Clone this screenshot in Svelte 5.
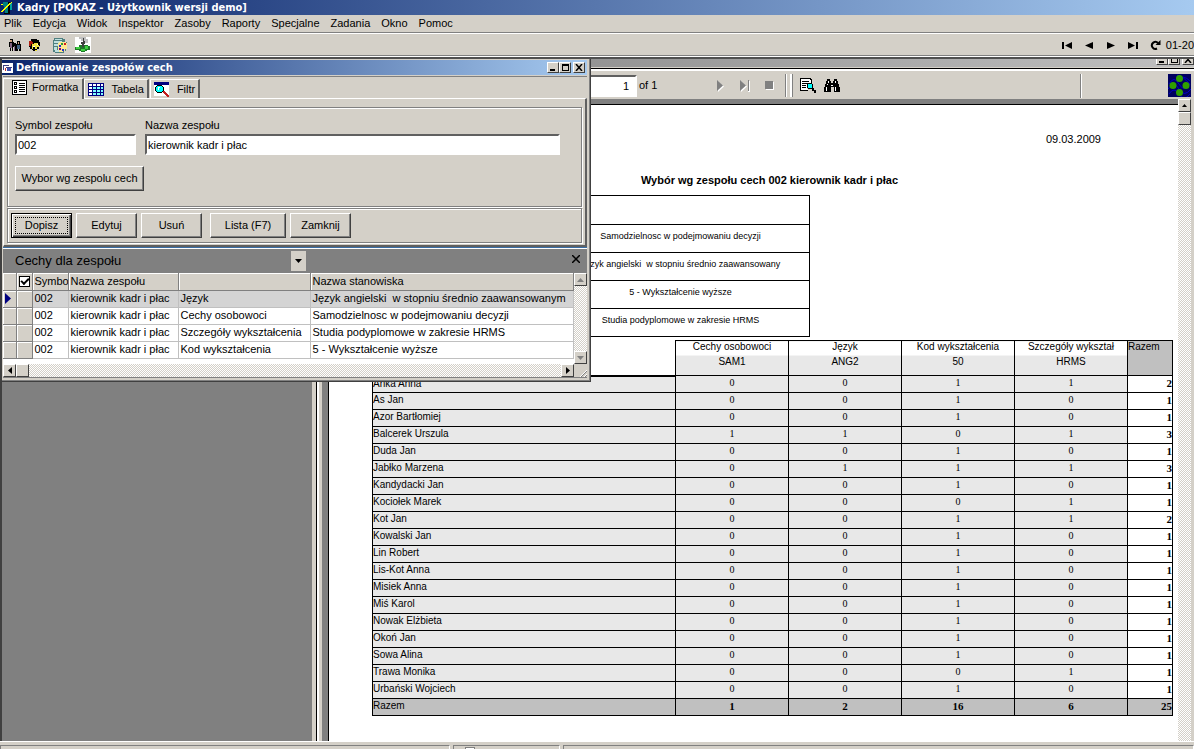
<script>
    const menu = ["Plik", "Edycja", "Widok", "Inspektor", "Zasoby", "Raporty", "Specjalne", "Zadania", "Okno", "Pomoc"];

    const traits = [
        ["Język", "Język angielski  w stopniu średnio zaawansowanym"],
        ["Cechy osobowoci", "Samodzielnosc w podejmowaniu decyzji"],
        ["Szczegóły wykształcenia", "Studia podyplomowe w zakresie HRMS"],
        ["Kod wykształcenia", "5 - Wykształcenie wyższe"]
    ];

    const criteria = [
        "",
        "Samodzielnosc w podejmowaniu decyzji",
        "Język angielski  w stopniu średnio zaawansowany",
        "5 - Wykształcenie wyższe",
        "Studia podyplomowe w zakresie HRMS"
    ];

    const columns = [
        ["Cechy osobowoci", "SAM1"],
        ["Język", "ANG2"],
        ["Kod wykształcenia", "50"],
        ["Szczegóły wykształ", "HRMS"]
    ];

    const people = [
        ["Anka Anna", 0, 0, 1, 1],
        ["As Jan", 0, 0, 1, 0],
        ["Azor Bartłomiej", 0, 0, 1, 0],
        ["Balcerek Urszula", 1, 1, 0, 1],
        ["Duda Jan", 0, 0, 1, 0],
        ["Jabłko Marzena", 0, 1, 1, 1],
        ["Kandydacki Jan", 0, 0, 1, 0],
        ["Kociołek Marek", 0, 0, 0, 1],
        ["Kot Jan", 0, 0, 1, 1],
        ["Kowalski Jan", 0, 0, 1, 0],
        ["Lin Robert", 0, 0, 1, 0],
        ["Lis-Kot Anna", 0, 0, 1, 0],
        ["Misiek Anna", 0, 0, 1, 0],
        ["Miś Karol", 0, 0, 1, 0],
        ["Nowak Elżbieta", 0, 0, 1, 0],
        ["Okoń Jan", 0, 0, 1, 0],
        ["Sowa Alina", 0, 0, 1, 0],
        ["Trawa Monika", 0, 0, 0, 1],
        ["Urbański Wojciech", 0, 0, 1, 0]
    ];

    const totals = [1, 2, 16, 6, 25];
    const sum = values => values.reduce((a, b) => a + b, 0);

    let symbol = "002";
    let name = "kierownik kadr i płac";
    let page = "1";
    let all = true;
</script>

<div class="app">
    <header class="title">
        <svg width="14" height="14" viewBox="0 0 14 14" shape-rendering="crispEdges">
            <path fill="#008080" d="M3 1h5v12H5V8H4V5H3z" />
            <path fill="#000" d="M8 1h2v11H8zM4 12h6v1H4z" />
            <path fill="#00a0a0" d="M10 2h2v7h-2z" />
            <path fill="#ffff00" d="M1 10h1V9h1V8h1V7h1V6h1V5h1V4h1V3h1V2h2v1h-1v1H9v1H8v1H7v1H6v1H5v1H4v1H3v1H1zM1 3h2v1H1zM11 1h1v1h-1z" />
        </svg>
        <span>Kadry [POKAZ - Użytkownik wersji demo]</span>
    </header>
    <nav class="menu">
        {#each menu as item}
            <button>{item}</button>
        {/each}
    </nav>
    <div class="toolbar">
        <button class="icon" aria-label="Pracownicy">
            <svg width="14" height="14" viewBox="0 0 14 14" shape-rendering="crispEdges">
                <path fill="#000" d="M1 4h1V1h3v3h1v5H5v4H2V9H1zM6 5h2v8H6zM9 3h3v3h1v7H8V6h1z" />
                <path fill="#806080" d="M2 5h2v5H2zM6 8h1v5H6z" />
                <path fill="#d4a080" d="M2 2h2v2H2zM10 4h1v2h-1z" />
                <path fill="#406080" d="M9 7h3v4H9z" />
                <path fill="#d4d0c8" d="M3 10h1v3H3zM10 11h1v2h-1z" />
            </svg>
        </button>
        <button class="icon" aria-label="Osoby">
            <svg width="14" height="14" viewBox="0 0 14 14" shape-rendering="crispEdges">
                <path fill="#000" d="M3 1h6v1h2v2h1v4h-1v3H9v2H5v-1H4v-1H2V9H1V3h2z" />
                <path fill="#b02010" d="M1 3h3v1h1v2H3v2H1z" />
                <path fill="#f0e040" d="M4 6h2V5h4v2h1v2H9v2H7V8H5v3H4zM7 12h2v1H7z" />
                <path fill="#fff" d="M5 8h2v1H5zM9 6h1v1H9z" />
            </svg>
        </button>
        <button class="icon gap" aria-label="Kolory">
            <svg width="17" height="17" viewBox="0 0 17 17" shape-rendering="crispEdges">
                <path fill="#508080" d="M3 1h9v1h2v3h2v6h-1v3h-2v2H4v-1H2V3h1z" />
                <path fill="#c0e0e0" d="M4 2h7v1H4zM3 4h8v2H3zM3 7h4v2H3zM3 10h3v3h2v2H4v-2H3z" />
                <path fill="#ffe890" d="M8 5h7v1h1v6h-2v2h-2v1H8v-2H7V6h1z" />
                <path fill="#d02020" d="M13 6h2v2h-2z" />
                <path fill="#30a030" d="M10 6h2v2h-2z" />
                <path fill="#2030d0" d="M8 8h2v2H8zM11 12h2v2h-2z" />
                <path fill="#800080" d="M8 11h2v2H8z" />
            </svg>
        </button>
        <button class="icon gap" aria-label="Drzewo">
            <svg width="16" height="16" viewBox="0 0 16 16" shape-rendering="crispEdges">
                <path fill="#fff" d="M0 0h16v16H0z" />
                <path fill="#c0c0c0" d="M4 0h7v2h2v4H9V4H6V2H4z" />
                <path fill="#207828" d="M4 8h9v1h2v4h-3v1h-2v1H6v-1H4v-1H0v-3h4z" />
                <path fill="#40d040" d="M1 10h4v2H1zM10 9h3v3h-3zM6 12h4v2H6z" />
                <path fill="#404040" d="M8 1h1v3h1v3H9v3H7V7H6V5h2z" />
            </svg>
        </button>
        <div class="records">
            <button class="icon" aria-label="Pierwszy"><svg width="11" height="9" viewBox="0 0 11 9"><path d="M0 1h2v7H0zM10 1v7L3 4.500z" /></svg></button>
            <button class="icon" aria-label="Poprzedni"><svg width="9" height="9" viewBox="0 0 9 9"><path d="M8 1v7L0 4.500z" /></svg></button>
            <button class="icon" aria-label="Następny"><svg width="9" height="9" viewBox="0 0 9 9"><path d="M1 1v7l8-3.500z" /></svg></button>
            <button class="icon" aria-label="Ostatni"><svg width="11" height="9" viewBox="0 0 11 9"><path d="M9 1h2v7H9zM1 1v7l7-3.500z" /></svg></button>
            <button class="icon" aria-label="Odśwież"><svg width="11" height="11" viewBox="0 0 11 11"><path d="M7 8.500A3.500 3.500 0 1 1 8 3" fill="none" stroke="#000" stroke-width="2" /><path d="M10.500 0v5h-5z" /></svg></button>
            <span>01-20</span>
        </div>
    </div>

    <main class="desktop">
        <section class="report">
            <div class="report-title">
                <button class="box" aria-label="Minimalizuj raport"><svg width="8" height="7" viewBox="0 0 8 7"><path d="M1 5h5v2H1z" /></svg></button>
                <button class="box" aria-label="Maksymalizuj raport"><svg width="8" height="7" viewBox="0 0 8 7"><path fill-rule="evenodd" d="M1 0h7v7H1zM2 2v4h5V2z" /></svg></button>
                <button class="box last" aria-label="Zamknij raport"><svg width="8" height="7" viewBox="0 0 8 7"><path fill="none" stroke="#000" stroke-width="1.500" d="M1 0l6 7M7 0L1 7" /></svg></button>
            </div>
            <div class="report-body">
                <div class="viewer-bar">
                    <input class="page-no" aria-label="Strona" bind:value={page} />
                    <span class="of">of 1</span>
                    <button class="icon" aria-label="Następna strona"><svg width="8" height="12" viewBox="0 0 8 12"><path fill="#fff" d="M1 1v11l6-5.500z" /><path fill="#808080" d="M0 0v11l6-5.500z" /></svg></button>
                    <button class="icon" aria-label="Ostatnia strona"><svg width="10" height="12" viewBox="0 0 10 12"><path fill="#fff" d="M1 1v11l6-5.500zM8 1h2v11H8z" /><path fill="#808080" d="M0 0v11l6-5.500zM8 0h1v11H8z" /></svg></button>
                    <button class="icon" aria-label="Zatrzymaj"><svg width="9" height="9" viewBox="0 0 9 9"><path fill="#fff" d="M1 1h8v8H1z" /><path fill="#808080" d="M0 0h8v8H0z" /></svg></button>
                    <span class="grip"></span>
                    <button class="icon" aria-label="Podgląd">
                        <svg width="16" height="15" viewBox="0 0 16 15" shape-rendering="crispEdges">
                            <path d="M0 0h11v1h1v4h-1V2h-1V1H1v11h7v1H0z" />
                            <path fill="#fff" d="M1 1h9v1h1v3H8v2H7v4h1v1H1z" />
                            <path d="M2 3h7v1H2zM2 5h6v1H2zM2 7h4v1H2zM2 9h4v1H2z" />
                            <path d="M8 5h4v1h1v4h1v2h2v3h-2v-2h-2v-2H8v-1H7V6h1z" />
                            <path fill="#00ffff" d="M8 6h4v4H8z" />
                        </svg>
                    </button>
                    <button class="icon search" aria-label="Szukaj">
                        <svg width="16" height="14" viewBox="0 0 16 14" shape-rendering="crispEdges">
                            <path d="M3 0h3v2h1v2h2V2h1V0h3v2h1v3h1v3h1v5h-6V8H7v5H0V8h1V5h1V2h1z" />
                            <path fill="#fff" d="M4 2h1v2H4zM11 2h1v2h-1zM2 8h1v4H2zM11 8h1v4h-1zM7 6h2v1H7zM3 5h1v1H3z" />
                        </svg>
                    </button>
                    <span class="rule"></span>
                    <svg class="logo" width="23" height="23" viewBox="0 0 23 23">
                        <path fill="#000060" d="M0 0h23v23H0z" />
                        <path fill="none" stroke="#0000c8" d="M1 10q5-9 10 0t11 0M0 15q6-9 11 0t12 0M1 20q5-8 10 0t11 0M10 6q5-6 12 1M9 1q7 2 13 9" />
                        <path fill="#30a000" d="M11.500 1a3.500 3.500 0 0 1 0 7 3.500 3.500 0 0 1 0-7zM5 8a3.500 3.500 0 0 1 0 7 3.500 3.500 0 0 1 0-7zM18 8a3.500 3.500 0 0 1 0 7 3.500 3.500 0 0 1 0-7zM11.500 15a3.500 3.500 0 0 1 0 7 3.500 3.500 0 0 1 0-7z" />
                    </svg>
                </div>
                <div class="canvas">
                    <div class="paper">
                        <p class="date">09.03.2009</p>
                        <h1>Wybór wg zespołu cech 002 kierownik kadr i płac</h1>
                        <ul class="criteria">
                            {#each criteria as text}
                                <li>{text}</li>
                            {/each}
                        </ul>
                        <table class="matrix">
                            <colgroup>
                                <col />
                                {#each columns as _}<col class="val" />{/each}
                                <col class="sum" />
                            </colgroup>
                            <thead>
                                <tr>
                                    <th class="corner"></th>
                                    {#each columns as [label, code]}
                                        <th><span>{label}</span><em>{code}</em></th>
                                    {/each}
                                    <th class="total"><span>Razem</span></th>
                                </tr>
                            </thead>
                            <tbody>
                                {#each people as [person, ...values]}
                                    <tr>
                                        <td class="name">{person}</td>
                                        {#each values as value}<td>{value}</td>{/each}
                                        <td class="sum">{sum(values)}</td>
                                    </tr>
                                {/each}
                            </tbody>
                            <tfoot>
                                <tr>
                                    <td class="name">Razem</td>
                                    {#each totals as value}<td>{value}</td>{/each}
                                </tr>
                            </tfoot>
                        </table>
                    </div>
                    <div class="scroll vertical">
                        <button class="arrow" aria-label="W górę"><svg width="5" height="3" viewBox="0 0 5 3"><path d="M0 3h5L2.500 0z" /></svg></button>
                        <div class="thumb"></div>
                    </div>
                </div>
            </div>
        </section>

        <section class="window">
            <div class="window-title">
                <svg width="12" height="12" viewBox="0 0 12 12" shape-rendering="crispEdges">
                    <path fill="#fff" d="M0 1h11v10H0z" />
                    <path fill="#404080" d="M1 3h6v1H1zM1 3h1v5H1zM4 5h6v1H4z" />
                    <path fill="#c03030" d="M3 6h1v3H3z" />
                    <path fill="#4050b0" d="M5 6h4v3H5z" />
                </svg>
                <span>Definiowanie zespołów cech</span>
                <button class="box" aria-label="Minimalizuj"><svg width="8" height="7" viewBox="0 0 8 7"><path d="M1 5h5v2H1z" /></svg></button>
                <button class="box" aria-label="Maksymalizuj"><svg width="8" height="7" viewBox="0 0 8 7"><path fill-rule="evenodd" d="M1 0h7v7H1zM2 2v4h5V2z" /></svg></button>
                <button class="box last" aria-label="Zamknij okno"><svg width="8" height="7" viewBox="0 0 8 7"><path fill="none" stroke="#000" stroke-width="1.500" d="M1 0l6 7M7 0L1 7" /></svg></button>
            </div>
            <div class="tabs">
                <button class="tab active">
                    <svg width="15" height="15" viewBox="0 0 15 15" shape-rendering="crispEdges">
                        <path fill="#fff" d="M0 0h15v15H0z" />
                        <path fill-rule="evenodd" d="M0 0h15v15H0zM1 1v13h13V1z" />
                        <path d="M2 2h3v3H2zM2 6h3v3H2zM2 10h3v3H2zM7 3h6v1H7zM7 5h6v1H7zM7 7h6v1H7zM7 9h6v1H7zM7 11h6v1H7z" />
                        <path fill="#fff" d="M3 3h1v1H3zM3 7h1v1H3zM3 11h1v1H3z" />
                    </svg>
                    Formatka
                </button>
                <button class="tab">
                    <svg width="16" height="13" viewBox="0 0 16 13" shape-rendering="crispEdges">
                        <path fill="#fff" d="M0 0h16v13H0z" />
                        <path fill="#80ffff" d="M4 4h11v8H4z" />
                        <path fill="#000080" d="M0 0h16v1H0zM0 3h16v1H0zM0 6h16v1H0zM0 9h16v1H0zM0 12h16v1H0zM0 0h1v13H0zM4 0h1v13H4zM8 0h1v13H8zM12 0h1v13h-1zM15 0h1v13h-1z" />
                    </svg>
                    Tabela
                </button>
                <button class="tab">
                    <svg width="16" height="15" viewBox="0 0 16 15" shape-rendering="crispEdges">
                        <path fill="#fff" d="M0 0h15v14H0z" />
                        <path fill="#000080" d="M0 0h15v3H0z" />
                        <path d="M3 3h5v1h1v1h1v4H9v1H8v1H3v-1H2V9H1V5h1V4h1z" />
                        <path fill="#00ffff" d="M3 4h5v1h1v4H8v1H3V9H2V5h1z" />
                        <path fill="#fff" d="M4 5h2v1H5v2H4z" />
                        <path fill="#c02020" d="M9 9h2v1h1v1h1v1h1v1h1v2h-2v-1h-1v-1h-1v-1h-1v-1H9z" />
                    </svg>
                    Filtr
                </button>
            </div>
            <div class="pane">
                <div class="etched form">
                    <div class="fields">
                        <div class="field">
                            <label for="symbol">Symbol zespołu</label>
                            <input id="symbol" bind:value={symbol} />
                        </div>
                        <div class="field wide">
                            <label for="name">Nazwa zespołu</label>
                            <input id="name" bind:value={name} />
                        </div>
                    </div>
                    <button class="push long">Wybor wg zespolu cech</button>
                </div>
                <div class="etched actions">
                    <button class="push default"><span>Dopisz</span></button>
                    <button class="push">Edytuj</button>
                    <button class="push">Usuń</button>
                    <button class="push list">Lista (F7)</button>
                    <button class="push">Zamknij</button>
                </div>
            </div>
            <div class="caption">
                <span>Cechy dla zespołu</span>
                <button class="drop" aria-label="Rozwiń"><svg width="7" height="4" viewBox="0 0 7 4"><path d="M0 0h7L3.500 4z" /></svg></button>
                <button class="icon close" aria-label="Zamknij listę"><svg width="8" height="8" viewBox="0 0 8 8"><path fill="none" stroke="#000" stroke-width="1.500" d="M0 0l8 8M8 0L0 8" /></svg></button>
            </div>
            <div class="grid-wrap">
                <div class="grid">
                    <table>
                        <colgroup>
                            <col class="mark" /><col class="check" /><col class="sym" /><col class="team" /><col class="kind" /><col />
                        </colgroup>
                        <thead>
                            <tr>
                                <th></th>
                                <th><input type="checkbox" aria-label="Wszystkie" bind:checked={all} /></th>
                                <th>Symbo</th>
                                <th>Nazwa zespołu</th>
                                <th></th>
                                <th>Nazwa stanowiska</th>
                            </tr>
                        </thead>
                        <tbody>
                            {#each traits as [kind, text], i}
                                <tr class:selected={i === 0}>
                                    <td class="head">{#if i === 0}<svg width="6" height="11" viewBox="0 0 6 11"><path fill="#000080" d="M0 0v11l6-5.500z" /></svg>{/if}</td>
                                    <td class="head"></td>
                                    <td>{symbol}</td>
                                    <td>{name}</td>
                                    <td>{kind}</td>
                                    <td>{text}</td>
                                </tr>
                            {/each}
                        </tbody>
                    </table>
                </div>
                <div class="scroll vertical">
                    <button class="arrow" aria-label="W górę"><svg width="7" height="4" viewBox="0 0 7 4"><path fill="#808080" d="M0 4h7L3.500 0z" /></svg></button>
                    <button class="arrow end" aria-label="W dół"><svg width="7" height="4" viewBox="0 0 7 4"><path fill="#808080" d="M0 0h7L3.500 4z" /></svg></button>
                </div>
            </div>
            <div class="scroll horizontal">
                <button class="arrow" aria-label="W lewo"><svg width="4" height="7" viewBox="0 0 4 7"><path d="M4 0v7L0 3.500z" /></svg></button>
                <div class="thumb"></div>
                <button class="arrow end" aria-label="W prawo"><svg width="4" height="7" viewBox="0 0 4 7"><path d="M0 0v7l4-3.500z" /></svg></button>
                <svg class="sizer" width="13" height="13" viewBox="0 0 13 13"><path fill="none" stroke="#808080" d="M7 13l6-6M11 13l2-2" /><path fill="none" stroke="#fff" d="M6 13l7-7M10 13l3-3" /></svg>
            </div>
        </section>
    </main>
    <footer class="status">
        <span class="first"></span>
        <span class="second"><i></i></span>
        <span class="third"></span>
    </footer>
</div>

<style>
    :global(body) {
        margin: 0;
        overflow: hidden;
    }
    .app {
        display: flex;
        flex-direction: column;
        height: 100vh;
        overflow: hidden;
        background: #d4d0c8;
        color: #000;
        font: 11px/13px "Liberation Sans", Arial, sans-serif;
    }
    .app * {
        box-sizing: border-box;
    }
    button,
    input {
        font: inherit;
        color: inherit;
        padding: 0;
        margin: 0;
        border-radius: 0;
    }
    button {
        border: none;
        background: none;
        white-space: nowrap;
    }
    svg {
        display: block;
        flex: none;
    }

    /* main frame */
    .title {
        flex: none;
        display: flex;
        align-items: center;
        gap: 3px;
        height: 15px;
        background: linear-gradient(to right, #0a246a, #a6caf0);
        color: #fff;
    }
    .title span,
    .window-title span {
        font-family: "DejaVu Sans Condensed", Tahoma, sans-serif;
        font-size: 11px;
        font-weight: 700;
    }
    .menu {
        flex: none;
        display: flex;
        gap: 11px;
        height: 18px;
        padding: 0 4px;
        border-bottom: 1px solid #808080;
    }
    .toolbar {
        flex: none;
        display: flex;
        align-items: center;
        height: 24px;
        padding-left: 8px;
        border-top: 1px solid #fff;
        border-bottom: 1px solid #fff;
        box-shadow: inset 0 -1px #808080;
    }
    .toolbar > .icon {
        margin-right: 6px;
    }
    .toolbar > .gap {
        margin: 0 4px 0 3px;
    }
    .records {
        display: flex;
        align-items: center;
        gap: 12px;
        margin-left: auto;
    }
    .records span {
        margin-left: -7px;
    }
    .desktop {
        position: relative;
        display: flex;
        flex: 1;
        min-height: 0;
        padding-left: 310px;
        border: 2px solid #404040;
        border-top-color: #505050;
        border-right: none;
        border-bottom: none;
        background: #808080;
    }

    /* report preview */
    .report {
        flex: 1;
        display: flex;
        flex-direction: column;
        min-width: 0;
        border-left: 4px solid #d4d0c8;
        box-shadow: inset 1px 0 #fff;
    }
    .report-title {
        flex: none;
        display: flex;
        justify-content: flex-end;
        align-items: flex-end;
        height: 9px;
        overflow: hidden;
        padding-bottom: 2px;
        border-bottom: 1px solid #d4d0c8;
        background: linear-gradient(to right, #808080, #c0c0c0);
    }
    .box {
        flex: none;
        display: flex;
        align-items: center;
        justify-content: center;
        width: 12px;
        height: 11px;
        border: 1px solid #fff;
        border-right-color: #404040;
        border-bottom-color: #404040;
        background: #d4d0c8;
    }
    .last {
        margin-left: 2px;
    }
    .report-body {
        flex: 1;
        display: flex;
        flex-direction: column;
        min-height: 0;
        border-top: 1px solid #000;
        border-left: 1px solid #000;
        box-shadow: inset 2px 2px #fff;
        padding: 2px 0 0 2px;
    }
    .viewer-bar {
        flex: none;
        display: flex;
        align-items: center;
        height: 28px;
        padding: 1px 3px 0 227px;
        background: #d4d0c8;
    }
    input {
        border: 2px solid #fff;
        border-top-color: #606060;
        border-left-color: #606060;
        background: #fff;
        outline: none;
    }
    .page-no {
        width: 91px;
        height: 22px;
        padding-right: 6px;
        text-align: right;
    }
    .of {
        width: 78px;
        margin-left: 2px;
    }
    .viewer-bar .icon {
        margin-right: 15px;
    }
    .grip {
        width: 8px;
        height: 23px;
        margin: 0 7px 0 -4px;
        border: 1px solid #808080;
        border-width: 0 1px;
        background: linear-gradient(to right, #fff 1px, transparent 1px, transparent 4px, #fff 4px);
    }
    .viewer-bar .search {
        margin-left: -7px;
    }
    .rule {
        width: 2px;
        height: 24px;
        margin-left: auto;
        border-left: 1px solid #808080;
        background: #fff;
    }
    .logo {
        margin-left: 86px;
    }
    .canvas {
        flex: 1;
        display: flex;
        min-height: 0;
        padding-right: 3px;
        border-left: 3px solid #d4d0c8;
        background: #d4d0c8;
    }
    .paper {
        flex: 1;
        min-width: 0;
        overflow: hidden;
        border: 1px solid #000;
        border-width: 1px 0 0 1px;
        margin: 5px 0 0 6px;
        padding: 0 5px 0 43px;
        background: #fff;
        box-shadow: 0 0 0 6px #808080;
        clip-path: inset(-5px 0 0 -6px);
    }
    .date {
        margin: 28px 72px 0 0;
        text-align: right;
    }
    h1 {
        margin: 28px 0 8px;
        padding-right: 6px;
        font-size: 11px;
        line-height: 13px;
        text-align: center;
    }
    .criteria {
        width: 259px;
        margin: 0 0 3px 179px;
        padding: 1px 0 0;
        border: 1px solid #000;
        border-bottom: none;
        list-style: none;
        font-size: 9px;
        text-align: center;
        white-space: pre;
    }
    .criteria li {
        height: 28px;
        padding-top: 5px;
        border-bottom: 1px solid #000;
    }
    table {
        width: 100%;
        border-collapse: collapse;
        table-layout: fixed;
    }
    .matrix {
        font-size: 10px;
        line-height: 12px;
        text-align: center;
    }
    .val {
        width: 113px;
    }
    .matrix col.sum {
        width: 45px;
    }
    .matrix th {
        height: 35px;
        padding: 0;
        border: 1px solid #000;
        background: linear-gradient(#fff 14px, #e8e8e8 14px);
        font-weight: 400;
        vertical-align: top;
    }
    .matrix th span,
    .matrix th em {
        display: block;
        font-style: normal;
        line-height: 12px;
    }
    .matrix th em {
        padding-top: 3px;
    }
    .matrix th.corner {
        border-top: none;
        border-left: none;
        border-bottom: 2px solid #000;
        background: none;
    }
    .matrix th.total {
        background: #c0c0c0;
        text-align: left;
    }
    .matrix td {
        height: 17px;
        padding: 0;
        border: 1px solid #000;
        background: #e8e8e8;
        font-family: "Liberation Serif", "Times New Roman", serif;
        line-height: 14px;
        vertical-align: top;
    }
    .matrix td.name {
        font-family: inherit;
        text-align: left;
    }
    .matrix td.sum {
        background: #fff;
        font-size: 11px;
        font-weight: 700;
        line-height: 15px;
        text-align: right;
    }
    .matrix tfoot td {
        background: #c0c0c0;
        font-size: 11px;
        font-weight: 700;
    }
    .matrix tfoot td.name {
        border-top: none;
        font-size: 10px;
        font-weight: 400;
    }
    .matrix tfoot td:last-child {
        text-align: right;
    }

    /* scroll bars */
    .scroll {
        flex: none;
        display: flex;
        background: repeating-conic-gradient(#fff 0 25%, #d4d0c8 0 50%) 0 0 / 2px 2px;
    }
    .vertical {
        flex-direction: column;
        width: 13px;
    }
    .arrow,
    .thumb {
        display: flex;
        align-items: center;
        justify-content: center;
        width: 13px;
        height: 13px;
        border: 1px solid #fff;
        border-right-color: #404040;
        border-bottom-color: #404040;
        background: #d4d0c8;
    }
    .vertical .end {
        margin-top: auto;
    }
    .horizontal .end {
        margin-left: auto;
    }

    /* trait set window */
    .window {
        position: absolute;
        top: 0;
        left: 0;
        width: 589px;
        padding: 1px 3px 3px 0;
        border: 1px solid #404040;
        border-width: 0 1px 1px 0;
        background: #d4d0c8;
        box-shadow: inset -1px -1px #808080;
    }
    .window-title {
        display: flex;
        align-items: center;
        height: 15px;
        padding-right: 2px;
        background: linear-gradient(to right, #0a246a, #a6caf0);
        color: #fff;
    }
    .window-title span {
        flex: 1;
        margin-left: 2px;
    }
    .tabs {
        display: flex;
        align-items: flex-end;
        height: 22px;
        margin: 1px 0 0 1px;
        border-top: 1px solid #808080;
    }
    .tab {
        display: flex;
        align-items: center;
        gap: 7px;
        height: 19px;
        margin-right: 1px;
        padding: 0 3px;
        border: 1px solid #fff;
        border-right: 2px solid #606060;
        border-bottom: none;
    }
    .active {
        gap: 5px;
        height: 21px;
        padding: 0 4px 3px 8px;
        margin: 0 0 -1px;
        background: #d4d0c8;
        z-index: 1;
    }
    .pane {
        margin-left: 1px;
        padding: 8px 3px 2px;
        border: 1px solid #fff;
        border-right: 2px solid #606060;
        border-bottom: 2px solid #606060;
    }
    .etched {
        display: flex;
        border: 1px solid #808080;
        box-shadow: inset 1px 1px #fff, 1px 1px #fff;
    }
    .form {
        flex-direction: column;
        gap: 11px;
        height: 100px;
        padding: 11px 21px 0 7px;
    }
    .fields {
        display: flex;
        gap: 9px;
    }
    .field {
        display: flex;
        flex-direction: column;
        gap: 2px;
        width: 121px;
    }
    .wide {
        flex: 1;
    }
    input[id] {
        width: 100%;
        height: 21px;
        padding-left: 1px;
    }
    .push {
        width: 61px;
        height: 25px;
        border: 1px solid #fff;
        border-right-color: #404040;
        border-bottom-color: #404040;
        box-shadow: inset -1px -1px #808080;
    }
    .long {
        width: 129px;
    }
    .actions {
        gap: 4px;
        height: 35px;
        margin-top: 1px;
        padding: 4px 3px;
    }
    .list {
        width: 76px;
        margin-left: 4px;
    }
    .default {
        padding: 1px;
        border: 1px solid #000;
        box-shadow: inset 1px 1px #fff, inset -1px -1px #404040, inset -2px -2px #808080;
    }
    .default span {
        display: block;
        margin: 0 2px;
        border: 1px dotted #000;
        line-height: 15px;
    }
    .caption {
        display: flex;
        align-items: center;
        height: 26px;
        margin-left: 1px;
        border-top: 1px solid #3a6ea5;
        box-shadow: inset 0 1px #fff;
        background: #808080;
        font-size: 13px;
    }
    .caption span {
        width: 288px;
        padding-left: 12px;
    }
    .drop {
        display: flex;
        align-items: center;
        justify-content: center;
        width: 15px;
        height: 20px;
        background: #d4d0c8;
    }
    .close {
        margin: 0 7px 4px auto;
    }
    .grid-wrap {
        display: flex;
        height: 91px;
        margin-left: 1px;
        background: #fff;
    }
    .grid {
        flex: 1;
    }
    .grid th,
    .grid td {
        height: 17px;
        padding: 0 0 0 2px;
        overflow: hidden;
        border: 1px solid #c0c0c0;
        border-width: 0 1px 1px 0;
        line-height: 13px;
        text-align: left;
        white-space: pre;
    }
    .grid th,
    .grid .head {
        border-color: #808080;
        background: #d4d0c8;
        box-shadow: inset 1px 1px #fff;
        font-weight: 400;
    }
    .grid th:nth-child(2) {
        padding: 0;
    }
    .selected td {
        background: #d4d4d4;
    }
    .mark {
        width: 13px;
    }
    .check {
        width: 16px;
    }
    .sym {
        width: 36px;
    }
    .team {
        width: 110px;
    }
    .kind {
        width: 132px;
    }
    input[type="checkbox"] {
        display: block;
        appearance: none;
        width: 11px;
        height: 11px;
        margin: 0 2px;
        border: 1px solid #000;
    }
    input[type="checkbox"]:checked::before {
        content: "";
        display: block;
        width: 6px;
        height: 3px;
        margin: 1px;
        border: 2px solid #000;
        border-width: 0 0 2px 2px;
        transform: rotate(-45deg);
    }
    .horizontal {
        margin-left: 1px;
        border-bottom: 1px solid #808080;
    }
    .sizer {
        background: #d4d0c8;
    }

    .status {
        flex: none;
        display: flex;
        gap: 3px;
        height: 8px;
        padding-top: 3px;
        border-top: 1px solid #fff;
        background: #d4d0c8;
    }
    .status span {
        border: 1px solid #808080;
        border-right-color: #fff;
        border-bottom: none;
    }
    .first {
        width: 450px;
    }
    .second {
        width: 107px;
        padding: 1px 0 0 11px;
    }
    .second i {
        display: block;
        width: 10px;
        height: 6px;
        border: 1px solid #808080;
        background: #fff;
    }
    .third {
        flex: 1;
    }
</style>
